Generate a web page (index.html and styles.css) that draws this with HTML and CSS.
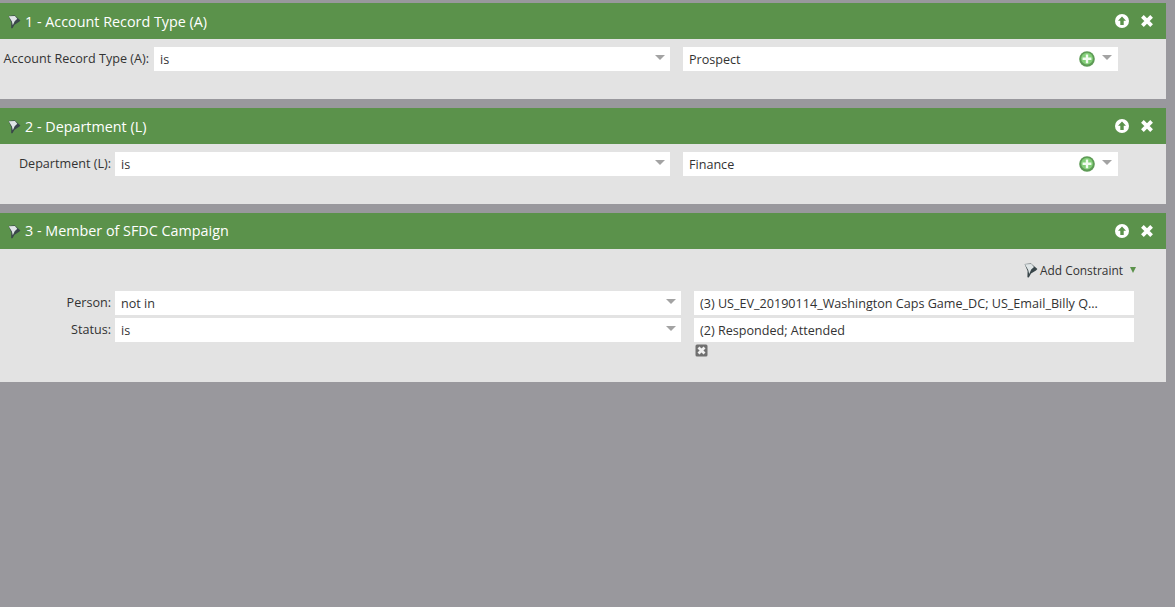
FILE: index.html
```html
<!DOCTYPE html>
<html lang="en">
<head>
<meta charset="utf-8">
<title>Smart list filters</title>
<link rel="stylesheet" href="styles.css">
</head>
<body>
<svg class="defs" width="0" height="0" aria-hidden="true">
  <symbol id="funnel" viewBox="0 0 14 16">
    <path d="M.6 2 L7 1.4 L13.4 7 L12 8.4 L7 11.6 L4.8 15.4 L3.4 15.2 L3.6 9 Z" fill="#39464a"/>
    <path d="M.8 2.3 L7.4 2 L10 5 L7.2 7.6 L5.2 12 L4.2 8 Z" fill="#dfe5e6"/>
  </symbol>
  <symbol id="up" viewBox="0 0 14 14">
    <circle cx="7" cy="7" r="7" fill="#fff"/>
    <path d="M7 2.6 L11 6.8 L8.7 6.8 L8.7 11 L5.3 11 L5.3 6.8 L3 6.8 Z" fill="#5b924b"/>
  </symbol>
  <symbol id="close" viewBox="0 0 14 14">
    <path d="M2.4 2.4 L11.6 11.6 M11.6 2.4 L2.4 11.6" stroke="#fff" stroke-width="3.8"/>
  </symbol>
  <symbol id="plus" viewBox="0 0 16 16">
    <circle cx="8" cy="8" r="7.8" fill="#5d9a55"/>
    <circle cx="8" cy="7.6" r="5.9" fill="#83cf78"/>
    <path d="M8 3.4 V12.2 M3.6 7.8 H12.4" stroke="#f1fbef" stroke-width="2.4"/>
  </symbol>
  <symbol id="remove" viewBox="0 0 13 13">
    <rect x=".5" y=".5" width="12" height="12" rx="1.5" fill="#707070"/>
    <path d="M3.5 3.5 L9.5 9.5 M9.5 3.5 L3.5 9.5" stroke="#f1f1f1" stroke-width="2.8"/>
  </symbol>
</svg>

<main class="canvas">
  <section class="card card-short">
    <header class="card-head">
      <svg class="funnel"><use href="#funnel"/></svg>
      <h2 class="card-title">1 - Account Record Type (A)</h2>
      <svg class="head-up"><use href="#up"/></svg>
      <svg class="head-close"><use href="#close"/></svg>
    </header>
    <div class="row row-first">
      <span class="label label-wide">Account Record Type (A):</span>
      <div class="field op op-a"><span class="field-text">is</span><i class="caret"></i></div>
      <div class="field val"><span class="field-text">Prospect</span><svg class="plus"><use href="#plus"/></svg><i class="caret"></i></div>
    </div>
  </section>

  <section class="card card-short">
    <header class="card-head">
      <svg class="funnel"><use href="#funnel"/></svg>
      <h2 class="card-title">2 - Department (L)</h2>
      <svg class="head-up"><use href="#up"/></svg>
      <svg class="head-close"><use href="#close"/></svg>
    </header>
    <div class="row row-first">
      <span class="label">Department (L):</span>
      <div class="field op op-b"><span class="field-text">is</span><i class="caret"></i></div>
      <div class="field val"><span class="field-text">Finance</span><svg class="plus"><use href="#plus"/></svg><i class="caret"></i></div>
    </div>
  </section>

  <section class="card card-tall">
    <header class="card-head">
      <svg class="funnel"><use href="#funnel"/></svg>
      <h2 class="card-title">3 - Member of SFDC Campaign</h2>
      <svg class="head-up"><use href="#up"/></svg>
      <svg class="head-close"><use href="#close"/></svg>
    </header>
    <div class="constraint">
      <svg class="funnel funnel-dark"><use href="#funnel"/></svg>
      <span class="constraint-text">Add Constraint</span>
      <i class="caret-green"></i>
    </div>
    <div class="row row-c">
      <span class="label">Person:</span>
      <div class="field op op-c"><span class="field-text">not in</span><i class="caret"></i></div>
      <div class="field val-c"><span class="field-text">(3) US_EV_20190114_Washington Caps Game_DC; US_Email_Billy Q...</span></div>
    </div>
    <div class="row row-d">
      <span class="label">Status:</span>
      <div class="field op op-c"><span class="field-text">is</span><i class="caret"></i></div>
      <div class="field val-c"><span class="field-text">(2) Responded; Attended</span></div>
    </div>
    <div class="remove-row"><svg class="remove"><use href="#remove"/></svg></div>
  </section>
</main>
</body>
</html>
```

FILE: styles.css
```css
* { box-sizing: border-box; }

html, body {
  margin: 0;
  height: 100%;
  overflow: hidden;
}

body {
  background: #99989d;
  font-family: "Open Sans", "Liberation Sans", sans-serif;
  font-size: 12.6px;
  color: #333;
}

.defs { position: absolute; }

.canvas {
  display: flex;
  flex-direction: column;
  gap: 9px;
  width: 1166px;
  padding-top: 3px;
}

.card { background: #e3e3e3; }
.card-short { height: 96px; }
.card-tall { height: 169px; }

.card-head {
  display: flex;
  align-items: center;
  height: 36px;
  padding: 0 12px 0 8px;
  background: #5b924b;
  color: #fff;
}

.funnel { width: 13px; height: 15px; flex: none; }

.card-title {
  flex: 1;
  margin: 0 0 0 4px;
  font-size: 14.35px;
  font-weight: 400;
  line-height: 36px;
  position: relative;
  top: 1px;
}

.card-tall .card-title { top: 0; }

.head-up { width: 14px; height: 14px; margin-right: 11px; }
.head-close { width: 14px; height: 14px; }

.row {
  display: flex;
  align-items: center;
  height: 24px;
}

.row-first { margin-top: 8px; }
.row-c { margin-top: 11px; }
.row-d { margin-top: 3px; }

.label {
  width: 111px;
  text-align: right;
  flex: none;
  position: relative;
  top: -1px;
}

.label-wide {
  width: 150px;
  padding-right: 1px;
  white-space: nowrap;
}

.field {
  display: flex;
  align-items: center;
  height: 24px;
  background: #fff;
  padding: 0 6px;
  flex: none;
}

.field-text { flex: 1; white-space: nowrap; }

.op { margin-left: 4px; margin-right: 13px; padding-right: 5px; }
.op-a { width: 516px; }
.op-b { width: 555px; }
.op-c { width: 566px; }

.val { width: 435px; }
.val-c { width: 440px; }

.caret {
  width: 0;
  height: 0;
  border-left: 5px solid transparent;
  border-right: 5px solid transparent;
  border-top: 5px solid #a3a3a3;
  position: relative;
  top: -2px;
}

.plus { width: 16px; height: 16px; margin-right: 7px; }

.constraint {
  display: flex;
  align-items: center;
  justify-content: flex-end;
  height: 20px;
  margin-top: 11px;
  padding-right: 30px;
  font-size: 11.9px;
}

.constraint-text { margin-left: 2px; }

.funnel-dark { width: 14px; height: 16px; }

.caret-green {
  width: 0;
  height: 0;
  margin-left: 7px;
  border-left: 3.5px solid transparent;
  border-right: 3.5px solid transparent;
  border-top: 6px solid #5b924b;
}

.remove-row {
  display: flex;
  padding-left: 695px;
  margin-top: 2px;
}

.remove { width: 13px; height: 13px; }
```
